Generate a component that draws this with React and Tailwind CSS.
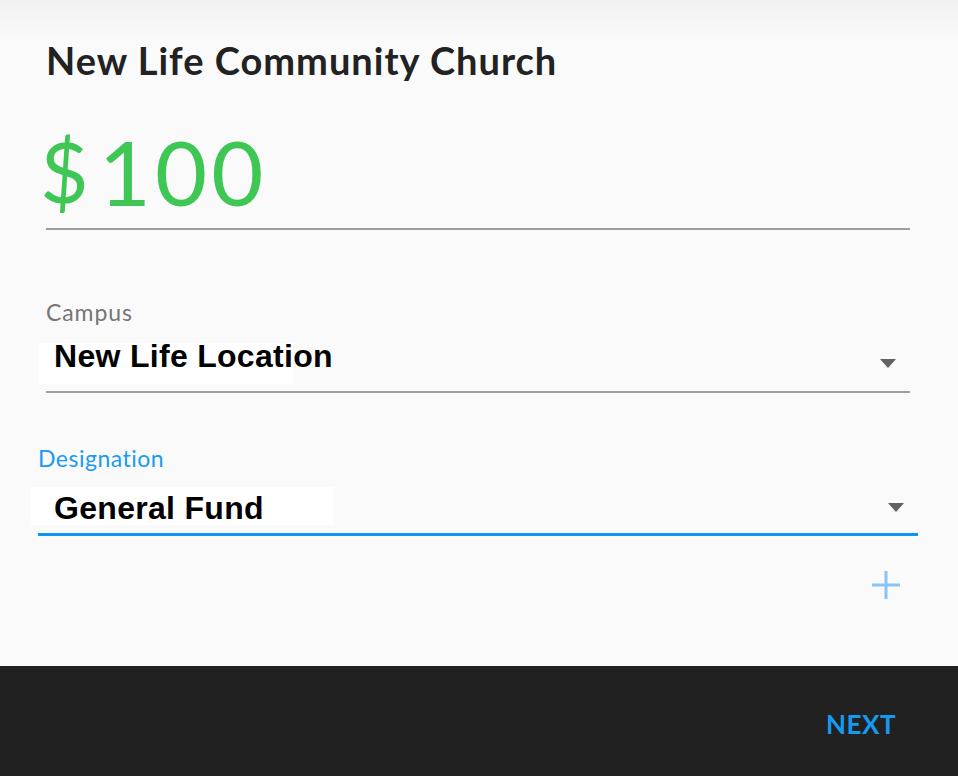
function Caret() {
  return (
    <svg width="16" height="9" viewBox="0 0 16 9" className="mr-[14px] mt-[16px] shrink-0">
      <path d="M0 0h16L8 9z" fill="#616161" />
    </svg>
  );
}

export default function App() {
  return (
    <div className="flex h-[776px] w-[958px] flex-col font-['Lato',sans-serif]">
      <div className="flex-1 bg-[linear-gradient(to_bottom,#f1f1f1_0px,#fafafa_40px)]">
        {/* Header + amount */}
        <div className="px-[46px] pr-[48px] pt-[38px]">
          <h1 className="text-[38px] font-bold leading-[44px] tracking-[1px] text-[#222]">
            New Life Community Church
          </h1>
          <div className="mt-[47px] flex items-end gap-[12px] border-b-2 border-[#9e9e9e] pb-[15px] text-[#3ec755]">
            <span className="-ml-[6px] text-[84px] leading-[84px]">$</span>
            <span className="-ml-[2px] text-[90px] leading-[84px] tracking-[4px]">100</span>
          </div>
        </div>

        {/* Campus */}
        <div className="mt-[71px] px-[46px] pr-[48px]">
          <div className="text-[23px] leading-[23px] tracking-[0.9px] text-[#757575]">Campus</div>
          <div className="mt-[19px] flex h-[50px] items-start justify-between border-b-2 border-[#9e9e9e]">
            <div className="-ml-[7px] h-[41px] w-[254px] bg-white pl-[15px] font-['Liberation_Sans',Arial,sans-serif] text-[32px] font-bold leading-[26px] tracking-[0.3px] text-black">
              <span className="whitespace-nowrap">New Life Location</span>
            </div>
            <Caret />
          </div>
        </div>

        {/* Designation */}
        <div className="mt-[54px] px-[38px] pr-[40px]">
          <div className="text-[23px] leading-[23px] tracking-[0.5px] text-[#1a9af2]">Designation</div>
          <div className="mt-[17px] flex h-[49px] items-start justify-between border-b-[3px] border-[#0a96f2]">
            <div className="-ml-[7px] h-[38px] w-[302px] bg-white pl-[23px] pt-[8px] font-['Liberation_Sans',Arial,sans-serif] text-[32px] font-bold leading-[26px] tracking-[0.3px] text-black">
              <span className="whitespace-nowrap">General Fund</span>
            </div>
            <Caret />
          </div>
        </div>

        <div className="mt-[35px] flex justify-end pr-[58px]">
          <button aria-label="Add designation">
            <svg width="28" height="28" viewBox="0 0 28 28">
              <path d="M14 0v28M0 14h28" stroke="#88c4f5" strokeWidth="3" />
            </svg>
          </button>
        </div>
      </div>

      {/* Footer */}
      <div className="flex h-[110px] items-center justify-end bg-[#212121] pr-[62px] pt-[6px]">
        <button className="text-[26px] font-bold tracking-[0.5px] text-[#1799f0]">NEXT</button>
      </div>
    </div>
  );
}
